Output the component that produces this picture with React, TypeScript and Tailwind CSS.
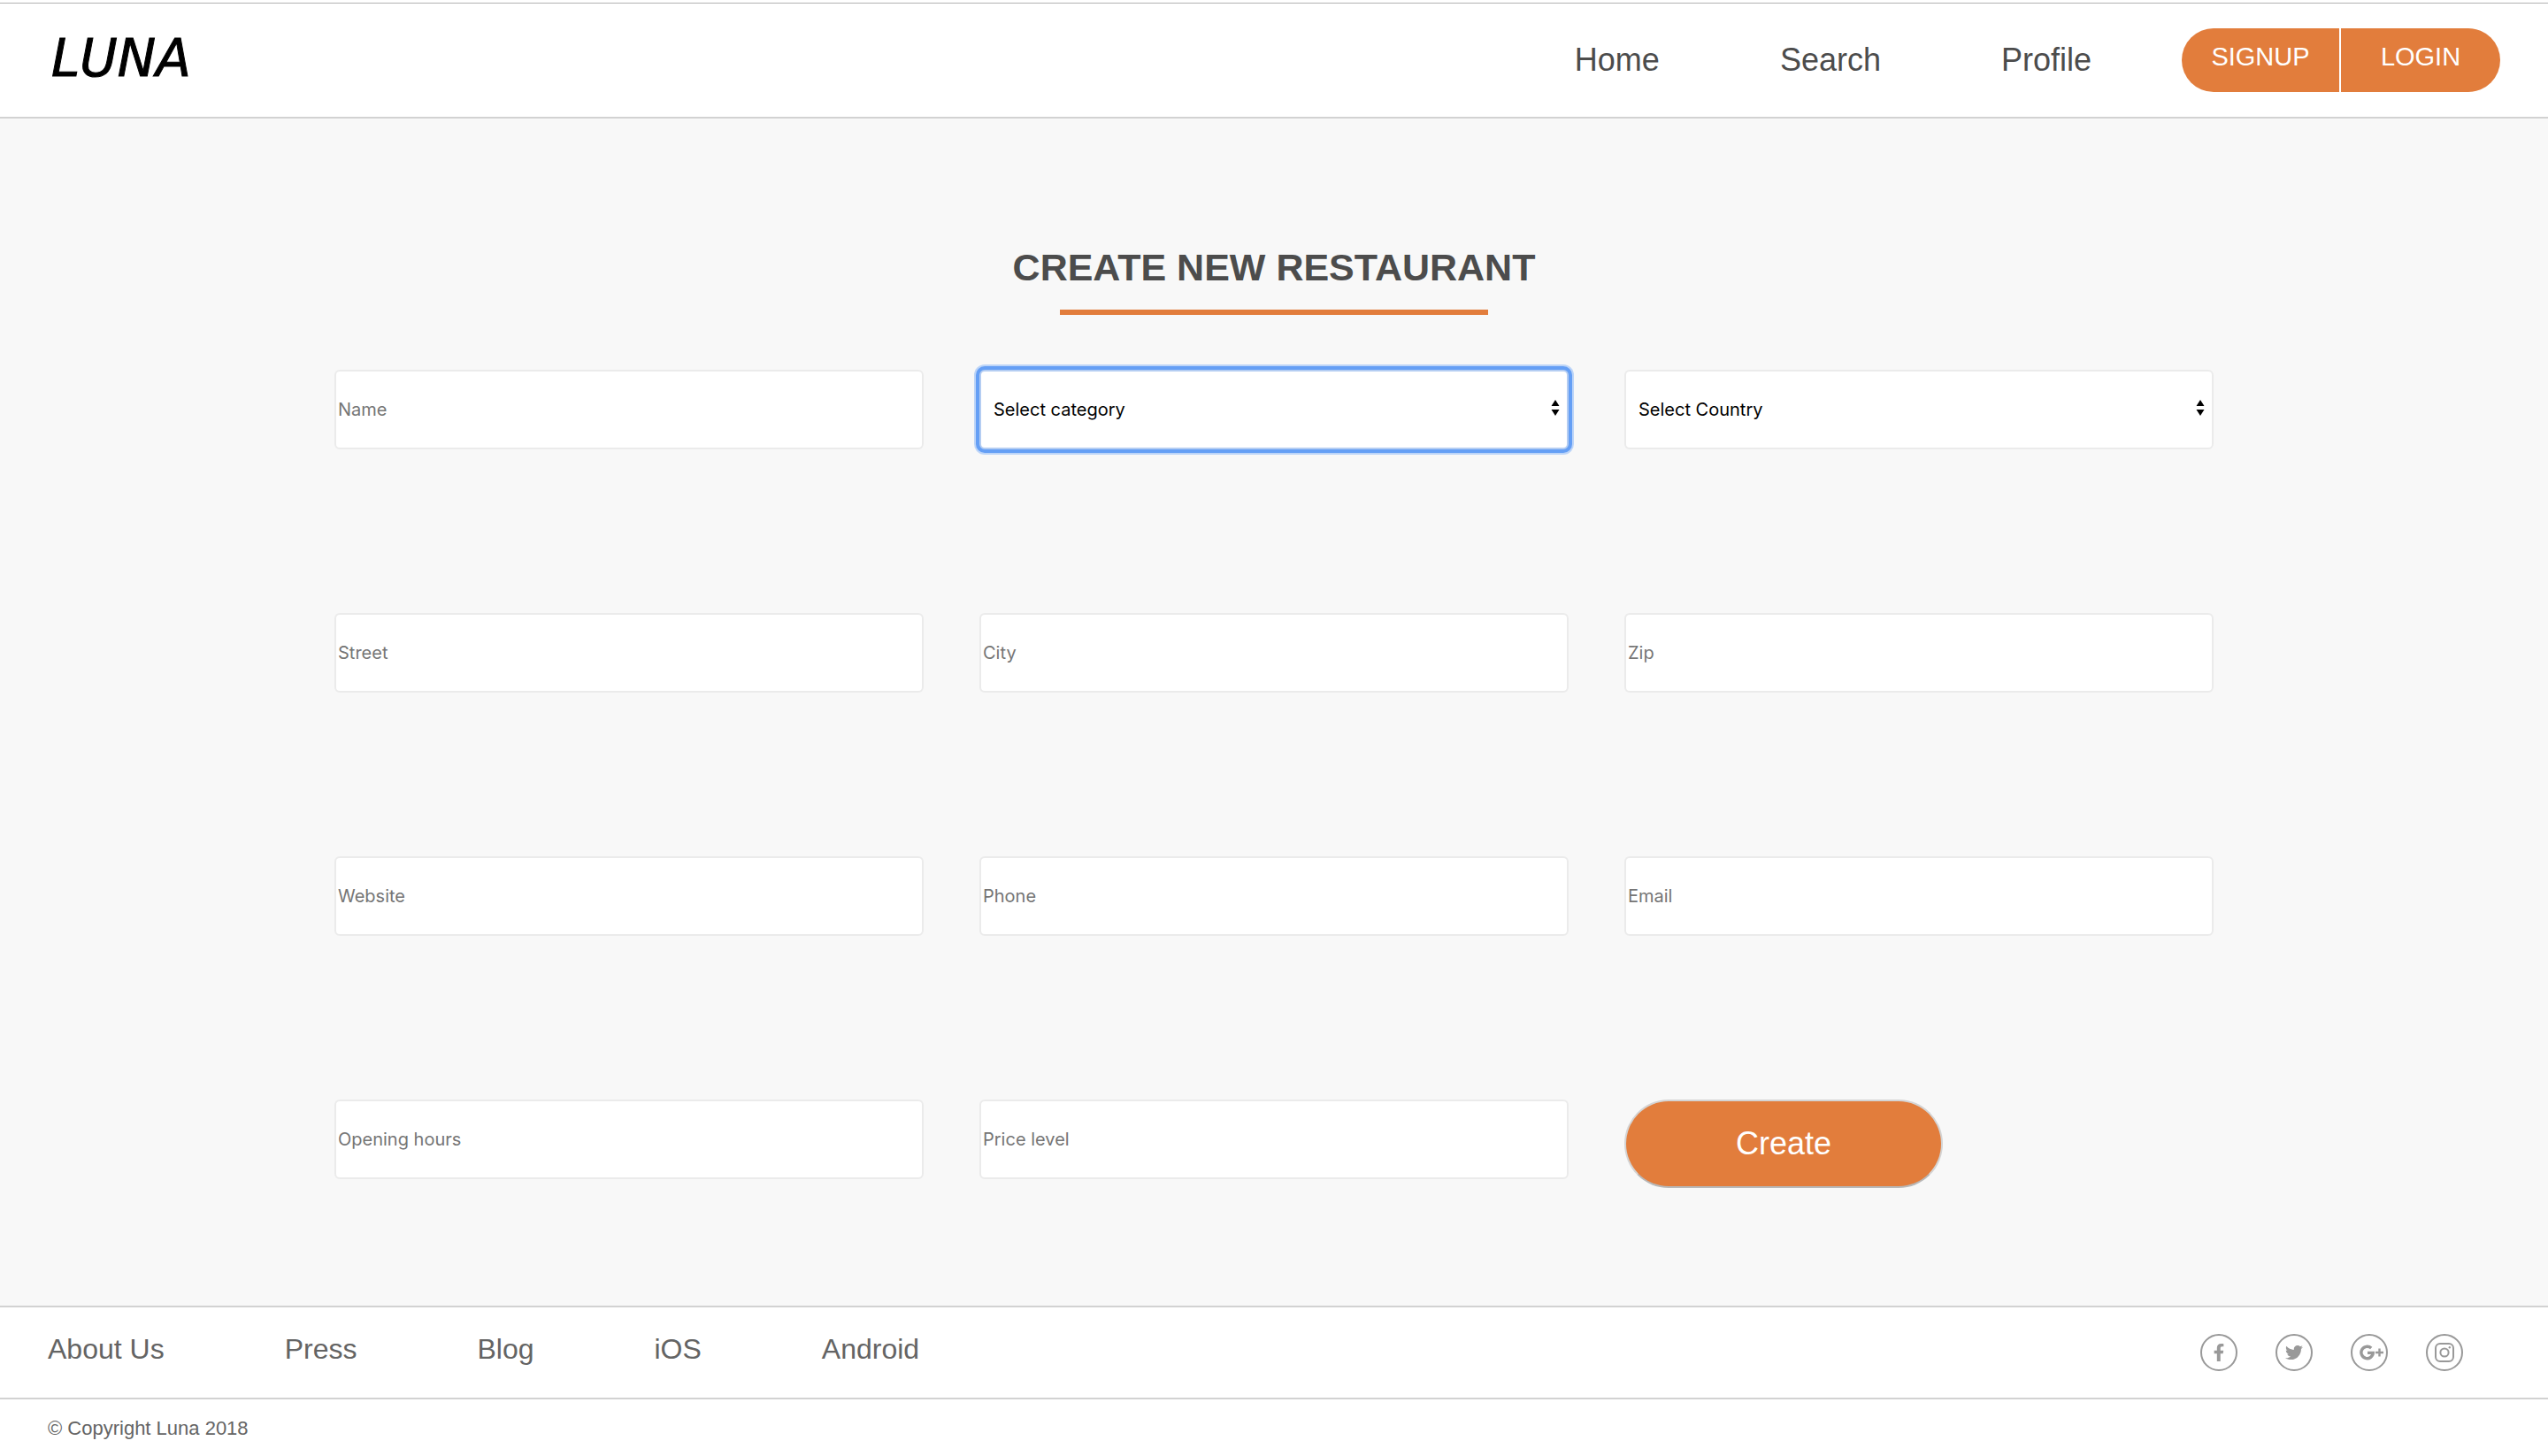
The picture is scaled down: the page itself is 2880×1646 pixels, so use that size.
import React from "react";
import { FaFacebookF, FaTwitter } from "react-icons/fa";

const navLinks = ["Home", "Search", "Profile"];
const footerLinks = ["About Us", "Press", "Blog", "iOS", "Android"];

function TextField({ label, type = "text" }: { label: string; type?: string }) {
  return (
    <input
      type={type}
      aria-label={label}
      placeholder={label}
      className="h-[90px] w-full rounded-[6px] border-2 border-[#ebebeb] bg-white px-0.5 font-[Inter,sans-serif] text-[20px] text-black outline-none placeholder:text-[#757575]"
    />
  );
}

function SelectField({ label, focused = false }: { label: string; focused?: boolean }) {
  return (
    <div className="relative h-[90px]">
      <select
        aria-label={label}
        className={
          "h-full w-full appearance-none rounded-[6px] border-2 bg-white px-3.5 font-[Inter,sans-serif] text-[20px] text-black outline-none " +
          (focused
            ? "border-[#b4cdf2] shadow-[0_0_0_4px_#659ff5,0_0_0_6px_#bdd5f8]"
            : "border-[#ebebeb]")
        }
      >
        <option>{label}</option>
      </select>
      <svg
        viewBox="0 0 10 18"
        aria-hidden="true"
        className="pointer-events-none absolute top-[34px] right-[10px] h-[18px] w-[10px]"
      >
        <path d="M5 0 9.500 7H0.500zM5 18 9.500 11H0.500z" fill="#000" />
      </svg>
    </div>
  );
}

function GooglePlus() {
  return (
    <svg viewBox="0 0 28 18" className="ml-[5px] h-[18px] w-[28px]" fill="none" stroke="#999">
      <path d="M13.200 4.100A6.700 6.700 0 1 0 15.300 9.400H9" strokeWidth="3.400" />
      <path d="M22.500 4.500v9M18 9h9" strokeWidth="2.400" />
    </svg>
  );
}

function Instagram() {
  return (
    <svg viewBox="0 0 22 22" className="h-[22px] w-[22px]" fill="none" stroke="#999" strokeWidth="2">
      <rect x="1" y="1" width="20" height="20" rx="5" />
      <circle cx="11" cy="11" r="4.600" />
      <circle cx="16.800" cy="5.200" r="1.200" fill="#999" stroke="none" />
    </svg>
  );
}

const socials = [
  { name: "Facebook", icon: <FaFacebookF className="h-5 w-5" /> },
  { name: "Twitter", icon: <FaTwitter className="h-5 w-5" /> },
  { name: "Google Plus", icon: <GooglePlus /> },
  { name: "Instagram", icon: <Instagram /> },
];

export default function App() {
  return (
    <div className="flex min-h-screen flex-col bg-white font-['Liberation_Sans',Arial,sans-serif] text-[#4c4c4c]">
      <div className="h-1 border-b border-[#b2b2b2]" />
      <header className="flex h-[130px] items-center justify-between border-b-2 border-[#d2d2d2] pr-[54px] pl-[58px]">
        <a
          href="#"
          className="pb-1 font-['DejaVu_Sans',sans-serif] text-[58px] leading-none text-black italic [-webkit-text-stroke:1px_#000]"
        >
          LUNA
        </a>
        <div className="flex items-center">
          <nav className="flex gap-[136px] pr-[102px] text-[36px]">
            {navLinks.map((l) => (
              <a key={l} href="#">
                {l}
              </a>
            ))}
          </nav>
          <div className="flex h-[72px] gap-0.5 text-[29px] text-white">
            <button className="w-[178px] rounded-l-full bg-[#e27d3c] pb-1.5">SIGNUP</button>
            <button className="w-[180px] rounded-r-full bg-[#e27d3c] pb-1.5">LOGIN</button>
          </div>
        </div>
      </header>

      <main className="flex-1 bg-[#f8f8f8] px-[13.125%] pt-[142px]">
        <h1 className="text-center text-[43px] leading-[52px] font-bold">CREATE NEW RESTAURANT</h1>
        <div className="mx-auto mt-[22px] h-1.5 w-[484px] bg-[#e27d3c]" />
        <form className="mt-[62px] grid grid-cols-3 gap-x-[63px] gap-y-[185px]">
          <TextField label="Name" />
          <SelectField label="Select category" focused />
          <SelectField label="Select Country" />
          <TextField label="Street" />
          <TextField label="City" />
          <TextField label="Zip" />
          <TextField label="Website" />
          <TextField label="Phone" />
          <TextField label="Email" type="email" />
          <TextField label="Opening hours" />
          <TextField label="Price level" />
          <button
            type="button"
            className="h-[100px] w-[360px] rounded-full border-2 border-[#d4d4d4] border-b-[#b8b8b8] bg-[#e27d3c] text-[36px] text-white"
          >
            Create
          </button>
        </form>
      </main>

      <footer className="text-[#646464]">
        <div className="flex h-[106px] items-center justify-between border-y-2 border-[#d2d2d2] pr-24 pl-[54px]">
          <nav className="flex gap-[136px] pb-2 text-[32px]">
            {footerLinks.map((l) => (
              <a key={l} href="#">
                {l}
              </a>
            ))}
          </nav>
          <div className="flex gap-[43px]">
            {socials.map((s) => (
              <a
                key={s.name}
                href="#"
                aria-label={s.name}
                className="flex h-[42px] w-[42px] items-center justify-center rounded-full border-2 border-[#999] text-[#999]"
              >
                {s.icon}
              </a>
            ))}
          </div>
        </div>
        <p className="h-16 pt-[17px] pl-[54px] text-[22px] leading-8">© Copyright Luna 2018</p>
      </footer>
    </div>
  );
}
